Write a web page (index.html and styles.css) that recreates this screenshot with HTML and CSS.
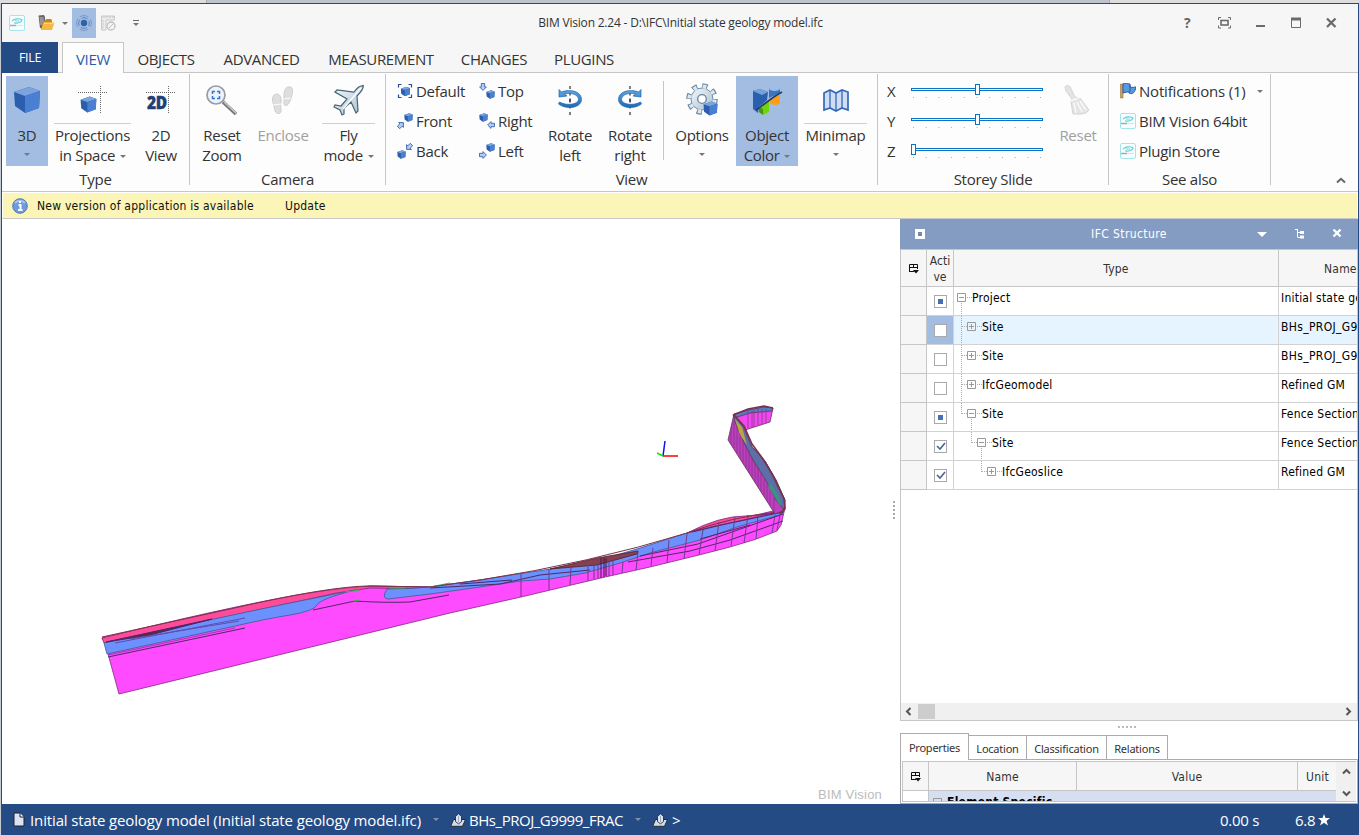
FILE: index.html
```html
<!DOCTYPE html>
<html lang="en">
<head>
<meta charset="utf-8">
<title>BIM Vision 2.24</title>
<link rel="stylesheet" href="styles.css">
</head>
<body>
<svg class="defs" width="0" height="0">
  <defs>
    <linearGradient id="metal" x1="0" y1="0" x2="1" y2="1"><stop offset="0" stop-color="#f4f8fb"/><stop offset="1" stop-color="#a9bfd0"/></linearGradient>
    <linearGradient id="spin" x1="0" y1="0" x2="0" y2="1"><stop offset="0" stop-color="#62a8e4"/><stop offset="1" stop-color="#1c69b8"/></linearGradient>
    <clipPath id="fold"><path d="M734 414 728 440 775 514 785 510 785 500 776 480 765 461 752 447 744 428V432L770 422 773 408 764 407Z"/></clipPath>
    <symbol id="cube" viewBox="0 0 28 28"><path d="M1 6 16 1 27 5 26 22 12 27 2 20Z" fill="#2b5fae"/><path d="M1 6 16 1 27 5 12 10Z" fill="#7ba3dd"/><path d="M12 10 27 5 26 22 12 27Z" fill="#4a7fd1"/></symbol>
    <symbol id="arrow" viewBox="0 0 8 8"><path d="M.6 4 4 .6 4 2.3H7.5V5.7H4V7.4Z" fill="#b5ccf0" stroke="#3966ae" stroke-width=".9"/></symbol>
    <symbol id="logo" viewBox="0 0 16 16"><rect x=".5" y=".5" width="15" height="15" rx="1.5" fill="#f8feff" stroke="#a5e5ea"/><path d="M3 6.300c1.500-2.800 7-3.300 10-1.300-1 2.600-5 4-8 2.700" fill="none" stroke="#5fd0d8" stroke-width="1.100"/><path d="M6 6c1-1.500 4-1.300 3.500.2S6.500 7 6.500 6" fill="none" stroke="#7ed8de" stroke-width=".9"/><path d="M1 10.500h6" stroke="#aaa" stroke-width="1.500"/><path d="M7 10.500h7" stroke="#c5eef0" stroke-width="1.300"/></symbol>
    <symbol id="chooser" viewBox="0 0 11 11"><path d="M1.500 9V1.500h8V6M1 8.500h5M1 4.500h9M5.500 1.500v3" fill="none" stroke="#111"/><path d="M5 7h6L8 10.500Z" fill="#111"/></symbol>
    <symbol id="site" viewBox="0 0 16 14"><path d="M3.500 6.500h12L12.500 13.300H.7Z" fill="#cfdcf0" stroke="#2b2b2b"/><path d="M5.500 8.500V3.500L8.500.8 11.500 3.500v5L8.500 10.800Z" fill="#dce6f5" stroke="#2b2b2b" stroke-width=".9"/><path d="M8.500 3v6" stroke="#8a97ab" stroke-width=".8"/></symbol>
  </defs>
</svg>
<div class="desk"><span></span></div>
<div class="window">
  <header class="titlebar">
    <div class="quick">
      <svg class="q-logo" width="16" height="16"><use href="#logo"/></svg>
      <svg class="q-open" width="17" height="16" viewBox="0 0 17 16"><path d="M.5.500 6 0 7 2v12L2 13Z" fill="#666"/><path d="M1.500 3h4M2 5h4M2 7h3M2 9h3" stroke="#ddd" stroke-width=".8"/><path d="M5 6h2l1-2h5l1 1.500V15H3Z" fill="#c98618"/><path d="M5.500 7.500H16.500L14 15H3Z" fill="#f6b83e"/><path d="M6 8.200h9.500" stroke="#fde2a0"/></svg>
      <i class="caret q-c1"></i>
      <span class="q-active"><svg width="16" height="16" viewBox="0 0 16 16" fill="none"><circle cx="8" cy="8" r="3.200" fill="#2c64a8"/><circle cx="8" cy="8" r="5.300" stroke="#4f7db8" stroke-width=".9" stroke-dasharray="6.300 2.025" stroke-dashoffset="3.150"/><circle cx="8" cy="8" r="7.400" stroke="#6b91c6" stroke-width=".8" stroke-dasharray="9 2.624" stroke-dashoffset="4.500"/></svg></span>
      <svg class="q-rule" width="15" height="16" viewBox="0 0 15 16"><path d="M.5 15V1h13v4H5v10Z" fill="#ececec" stroke="#c9c9c9"/><path d="M3 1v2M6 1v2M9 1v2M12 1v2M1 6h2M1 9h2M1 12h2" stroke="#c4c4c4"/><circle cx="10" cy="11" r="4" fill="#f3f3f3" stroke="#c0c0c0" stroke-width="1.300"/><path d="M7.500 13.500 12.500 8.500" stroke="#c0c0c0"/></svg>
      <span class="q-more"><i></i><b class="caret"></b></span>
    </div>
    <h1 class="title">BIM Vision 2.24 - D:\IFC\Initial state geology model.ifc</h1>
    <div class="controls">
      <span class="help">?</span>
      <svg width="13" height="12" viewBox="0 0 13 12" fill="none" stroke="#6b6b6b"><path d="M.5 3V.5H3M10 .5h2.500V3M12.500 8.500V11H10M3 11H.5V8.500"/><rect x="3" y="3.500" width="7" height="4.500" stroke-width="1.600"/></svg>
      <svg width="10" height="12"><path d="M0 9h9" stroke="#6b6b6b" stroke-width="2"/></svg>
      <svg width="10" height="12" viewBox="0 0 10 12"><path d="M.5 1v9.500h9V1" fill="none" stroke="#6b6b6b"/><path d="M0 2h10" stroke="#6b6b6b" stroke-width="3"/></svg>
      <svg width="11" height="12" viewBox="0 0 11 12"><path d="M1 1.500 9.500 10M9.500 1.500 1 10" stroke="#6b6b6b" stroke-width="2.300"/></svg>
    </div>
  </header>
  <nav class="tabs">
    <span class="file">FILE</span><span class="view">VIEW</span><span class="t84">OBJECTS</span><span class="t107">ADVANCED</span><span class="t132">MEASUREMENT</span><span class="t94">CHANGES</span><span class="t86">PLUGINS</span>
  </nav>
  <section class="ribbon">
    <div class="group g-type">
      <div class="tools">
        <div class="btn on b42"><div class="ico"><svg width="28" height="28"><use href="#cube"/></svg></div><span>3D</span><i class="caret"></i></div>
        <div class="btn line b77"><div class="ico"><svg width="32" height="32" viewBox="0 0 32 32"><path d="M1 8.500h30M23.500 2v27" stroke="#666" stroke-dasharray="1 1"/><svg x="3" y="12" width="17" height="17"><use href="#cube"/></svg></svg></div><span>Projections<br>in Space <i class="caret in"></i></span></div>
        <div class="btn b60"><div class="ico"><svg width="32" height="32" viewBox="0 0 32 32"><path d="M1 8.500h30M23.500 2v27" stroke="#666" stroke-dasharray="1 1"/><text x="2" y="25" class="twod" textLength="20" lengthAdjust="spacingAndGlyphs">2D</text></svg></div><span>2D<br>View</span></div>
      </div>
      <p>Type</p>
    </div>
    <div class="group g-camera">
      <div class="tools">
        <div class="btn b60"><div class="ico"><svg width="32" height="32" viewBox="0 0 32 32"><path d="M17 18 30 30" stroke="#777" stroke-width="3.600"/><path d="M18 18 30 29" stroke="#ccc" stroke-width="1.300"/><circle cx="10" cy="11" r="9" fill="#eef3fa" stroke="#969ba5" stroke-width="1.700"/><path d="M6.500 10V7.500H9M11 7.500h2.500V10M13.500 12v2.500H11M9 14.500H6.500V12" fill="none" stroke="#3278d1" stroke-width="1.500"/></svg></div><span>Reset<br>Zoom</span></div>
        <div class="btn off b60 nudge"><div class="ico"><svg width="24" height="32" viewBox="0 0 24 32"><g fill="#dedede" stroke="#c6c6c6" stroke-width=".8"><path d="M6 10C1 10 1 16 2 19c1 2 1 5 2 8 2 4 7 3 6-1 0-3-1-4 0-7 1-5-1-9-4-9Z"/><path d="M18 3c4-1 4 4 3 8-1 3-1 5-3 8-2 4-6 3-5-1 0-3 0-4 0-6 0-5 1-9 5-9Z"/></g><path d="m2 21 8-1M13 15l7-1" stroke="#fdfdfd"/></svg></div><span>Enclose</span></div>
        <div class="btn line b54"><div class="ico"><svg width="32" height="32" viewBox="0 0 32 32"><path d="M30 2c-3-1-6 2-9 6L4 6 2 8l12 7-6 7-6-1-1 2 6 3 2 5 2-1v-6l7-6 5 11 2-2-1-15c5-5 7-9 6-11Z" fill="url(#metal)" stroke="#456574" stroke-width="1.200"/><path d="M28 4 10 25" stroke="#fff" stroke-width="1.300"/></svg></div><span>Fly<br>mode <i class="caret in"></i></span></div>
      </div>
      <p>Camera</p>
    </div>
    <div class="group g-view">
      <div class="tools">
        <div class="small">
          <div><svg width="16" height="16" viewBox="0 0 16 16"><path d="M1.500 4.500v-3h3M11.500 1.500h3v3M14.500 11.500v3h-3M4.500 14.500h-3v-3" fill="none" stroke="#264f91" stroke-width="1.200"/><svg x="3.500" y="3.500" width="10" height="10"><use href="#cube"/></svg></svg>Default</div>
          <div><svg width="16" height="16" viewBox="0 0 16 16"><svg x="7" y="0" width="9" height="9"><use href="#cube"/></svg><g transform="rotate(135 4 12)"><svg x="0" y="8" width="8" height="8"><use href="#arrow"/></svg></g></svg>Front</div>
          <div><svg width="16" height="16" viewBox="0 0 16 16"><svg x="0" y="7" width="9" height="9"><use href="#cube"/></svg><g transform="rotate(-45 12 4)"><svg x="8" y="0" width="8" height="8"><use href="#arrow"/></svg></g></svg>Back</div>
        </div>
        <div class="small second">
          <div><svg width="16" height="16" viewBox="0 0 16 16"><svg x="7" y="7" width="9" height="9"><use href="#cube"/></svg><g transform="rotate(-90 4 4)"><svg x="0" y="0" width="8" height="8"><use href="#arrow"/></svg></g></svg>Top</div>
          <div><svg width="16" height="16" viewBox="0 0 16 16"><svg x="0" y="0" width="9" height="9"><use href="#cube"/></svg><svg x="8" y="8" width="8" height="8"><use href="#arrow"/></svg></svg>Right</div>
          <div><svg width="16" height="16" viewBox="0 0 16 16"><svg x="7" y="0" width="9" height="9"><use href="#cube"/></svg><g transform="rotate(180 4 12)"><svg x="0" y="8" width="8" height="8"><use href="#arrow"/></svg></g></svg>Left</div>
        </div>
        <div class="btn b60"><div class="ico low"><svg width="26" height="30" viewBox="0 0 26 30"><path d="M13 0v30" stroke="#555" stroke-width="1.500" stroke-dasharray="3 3.500"/><path id="turn" d="M2 3.500v7.500l8-1-2.500-2c7-2 14 1 14 5.500s-11 7-19 2.500l-1 2c9 6.500 23 3.500 23-4.500 0-8-11-11-20-7.500Z" fill="url(#spin)" stroke="#1c65ac" stroke-width=".7"/><path d="M13 12.500v4" stroke="#444" stroke-width="1.500"/></svg></div><span>Rotate<br>left</span></div>
        <div class="btn b60"><div class="ico low"><svg width="26" height="30" viewBox="0 0 26 30"><path d="M13 0v30" stroke="#555" stroke-width="1.500" stroke-dasharray="3 3.500"/><use href="#turn" transform="translate(26 0) scale(-1 1)"/><path d="M13 12.500v4" stroke="#444" stroke-width="1.500"/></svg></div><span>Rotate<br>right</span></div>
        <div class="divider"></div>
        <div class="btn b66"><div class="ico"><svg width="33" height="33" viewBox="0 0 33 33"><circle cx="16" cy="16" r="13.500" fill="none" stroke="#6486a3" stroke-width="4.500" stroke-dasharray="5.300 5.300"/><circle cx="16" cy="16" r="11" fill="url(#metal)" stroke="#6c8da8" stroke-width="1"/><circle cx="16" cy="16" r="12.600" fill="none" stroke="#dce7ef" stroke-width="4" stroke-dasharray="3.300 6.596" stroke-dashoffset="-.7"/><circle cx="16" cy="16" r="4.300" fill="#fff" stroke="#6486a3" stroke-width="1.300"/><svg x="17" y="18" width="15" height="15"><use href="#cube"/></svg></svg></div><span>Options</span><i class="caret"></i></div>
        <div class="btn on b62"><div class="ico low"><svg width="32" height="32" viewBox="0 0 32 32"><path d="M2 6 9 4l8 3-1 8-8 7-1 6-5-4Z" fill="#2961b0"/><path d="M2 6 9 4l8 3-6 3Z" fill="#76a2da"/><path d="m8 22 10-7v12l-6 3-4-3Z" fill="#71d40c"/><path d="m8 22 4 2v6l-4-3Z" fill="#43951b"/><path d="M18 3v10l11-5V3Z" fill="#3a74c4"/><ellipse cx="23.500" cy="3.500" rx="5.500" ry="2.500" fill="#9bbde8"/><path d="M19 14 29 9v9c-3 3-8 2-10 0Z" fill="#ff9d13"/><path d="M5 25C14 19 20 13 31 7" stroke="#263f65" stroke-width="1.700" fill="none"/></svg></div><span>Object<br>Color <i class="caret in"></i></span></div>
        <div class="btn line b63"><div class="ico low"><svg width="28" height="26" viewBox="0 0 28 26"><path d="m2 5 6-3 6 3 6-3 6 2v18l-6-2-6 3-6-3-6 2Z" fill="#cfdef5" stroke="#3467b8" stroke-width="1.700"/><path d="M8 2v18M14 5v18M20 2v18" stroke="#3467b8" stroke-width="1.300"/></svg></div><span>Minimap</span><i class="caret"></i></div>
      </div>
      <p>View</p>
    </div>
    <div class="group g-storey">
      <div class="tools">
        <div class="sliders">
          <div><b>X</b><svg width="134" height="20"><rect x="1.500" y="5.500" width="131" height="2" fill="#fff" stroke="#0b72c4"/><path d="M3 14.500h130" stroke="#aaa" stroke-dasharray="1 11.700"/><rect x="65.500" y="1.500" width="4" height="10" fill="#fff" stroke="#0b72c4"/></svg></div>
          <div><b>Y</b><svg width="134" height="20"><rect x="1.500" y="5.500" width="131" height="2" fill="#fff" stroke="#0b72c4"/><path d="M3 14.500h130" stroke="#aaa" stroke-dasharray="1 11.700"/><rect x="65.500" y="1.500" width="4" height="10" fill="#fff" stroke="#0b72c4"/></svg></div>
          <div><b>Z</b><svg width="134" height="20"><rect x="1.500" y="5.500" width="131" height="2" fill="#fff" stroke="#0b72c4"/><path d="M3 14.500h130" stroke="#aaa" stroke-dasharray="1 11.700"/><rect x="1.500" y="1.500" width="4" height="10" fill="#fff" stroke="#0b72c4"/></svg></div>
        </div>
        <div class="btn off b60"><div class="ico"><svg width="30" height="32" viewBox="0 0 30 32"><path d="M2 3c2-3 6-1 6 2l4 8 5 1 9 12-3 3-5 1-8 0-2-12 1-3-6-8Z" fill="#e4e4e4" stroke="#d4d4d4"/><path d="m8 17 9-4M11 19l2 10M14 18l5 10M17 17l6 9" stroke="#f8f8f8" stroke-width="1.500"/></svg></div><span>Reset</span></div>
      </div>
      <p>Storey Slide</p>
    </div>
    <div class="group g-also">
      <div class="tools"><div class="small links">
        <div><svg width="16" height="16" viewBox="0 0 16 16"><path d="M.5 1h2.500v14H.5Z" fill="#d5a052" stroke="#98743a" stroke-width=".6"/><path d="M3 1c3-2 5 0 7 0v3c2.500 1 4 0 6 0-1 5-3 8-7 6V9c-2 0-3 0-6 1Z" fill="#5a98e2" stroke="#225ca4"/><path d="M10 2v7" stroke="#225ca4"/></svg><span class="notif">Notifications (1)</span><i class="caret"></i></div>
        <div><svg width="16" height="16"><use href="#logo"/></svg>BIM Vision 64bit</div>
        <div><svg width="16" height="16"><use href="#logo"/></svg>Plugin Store</div>
      </div></div>
      <p>See also</p>
    </div>
    <svg class="collapse" width="10" height="7" viewBox="0 0 10 7"><path d="M1 5.500 5 1.800 9 5.500" fill="none" stroke="#666" stroke-width="2"/></svg>
  </section>
  <div class="notice">
    <svg width="16" height="16" viewBox="0 0 16 16"><circle cx="8" cy="8" r="7.300" fill="#6d9bdd" stroke="#507bb9"/><path d="M3 5a6 5 0 0 1 10 0" fill="none" stroke="#a9c7ef" stroke-width="2"/><path d="M8 3v2M6.500 7h2v5M6 12h4.500" fill="none" stroke="#fff" stroke-width="2"/></svg>
    <span class="msg">New version of application is available</span><span>Update</span>
  </div>
  <main>
    <div class="viewport">
      <svg class="model" width="891" height="585" viewBox="2 219 891 585">
        <g stroke="#7d2b7e" stroke-width=".8" stroke-linejoin="round">
          <path d="M102 638 105 643 119 694 450 613 521 597 603 577.500 650 567 699 555 730 547 755 539.500 777 531 781 525 785 508 740 519 687 534 620 555 550 570 480 580 430 587 370 586 230 609Z" fill="#ff4bff"/>
          <path d="M102 638 Q200 614 265 601 T370 586 L430 587 460 584 430 589 370 588 Q335 592 300 601 L104 643Z" fill="#ff4b9c"/>
          <path d="M104 643 Q245 612 300 601 T355 590 Q320 599 317 605 T290 615 Q265 619 235 626 L107 654Z" fill="#6c91ff" stroke="#3c5c8d"/>
          <path d="M387 589Q410 589 430 587 L480 580 550 569 600 560 640 548 687 533 710 525 740 518 784 512 780 515 740 526 700 540 650 553 620 563 585 573 550 579 521 581 480 587 430 594 388 599Q381 598 387 589Z" fill="#6c91ff" stroke="#3c5c8d"/>
          <path d="M687 533Q720 516 745 516L770 514 784 510 740 521 710 527Z" fill="#ff4b9c"/>
          <path d="M550 569 597 558 638 551 637 554 597 565Z" fill="#88404f" stroke="#4b2230"/>
        </g>
        <g fill="none" stroke="#4f2768" stroke-width="1">
          <path d="M106 642 212 619 150 635Z" fill="#5c2b3b"/>
          <path d="M115 643 245 618M130 639 239 621" stroke="#624bb0"/>
          <path d="M108 657 245 628M313 610 355 601Q385 603 410 602L449 595M430 588 500 584 540 575 590 570M460 584 512 580M628 562 690 551 730 540 783 521M640 556 698 544 783 514M692 532 730 523 783 512M700 539 750 525"/>
          <path d="M108 655 235 628" stroke="#a734bd"/>
          <path d="M345 592 360 590M353 601 360 600M390 588 405 588M430 587 450 583" stroke="#3bb64c"/>
          <path d="M521 573v24M549 569v21M571 567l-1 18M588 564v17M594 563v16M598 560v18M609 560v16M613 559v16M623 562l-1 11M638 552l-2 18M653 548l-2 18M669 540l-2 23M687 534l-3 25M703 530l-4 25M719 522l-4 29M735 517l-4 29M748 515l-4 28M758 515l-2 24M775 515l-3 18M780 515l-3 15" stroke="#733b89"/>
          <path d="M601 558v20M604 558v19M606 558v18" stroke="#4b1a48" stroke-width="1.300" stroke-opacity=".8"/>
          <path d="M480 580Q590 563 687 533 730 517 784 511" stroke="#80304c"/>
          <path d="M102 637 230 609Q330 586 370 586L430 587 480 580" stroke="#80304c"/>
        </g>
        <g stroke="#64335f" stroke-width=".8">
          <path d="M734 414 748 410 764 407 773 408 770 422 745 430 733 438Z" fill="#f047ef"/>
          <path d="m733 415 15-5 16-3 9 1-1 3-22 2-16 5Z" fill="#5a7bc2"/>
          <path d="M734 414 728 440 775 514 785 510 785 500 776 480 765 461 752 447 744 428Z" fill="#bf3dc0"/>
          <path d="M734 415 744 428 752 447 765 461 776 480 785 500 784 510 776 500 765 479 753 460 744 443 735 422Z" fill="#5c6fa7"/>
          <path d="m735 419 7 8 5 18-7-10Z" fill="#bba540" stroke="none"/>
          <path d="m771 483 10 19-1 4-12-20Z" fill="#3a9580" stroke="none"/>
        </g>
        <path clip-path="url(#fold)" d="M731 421v24M734 421v27M737 427v27M740 434v27M743 440v25M746 445v25M749 450v25M752 457v25M755 463v23M758 467v25M761 473v24M764 479v23M767 485v21M770 491v20M774 497v15M748 411v17M752 411v16M754 410v17M758 409v16M762 409v15M766 409v14" stroke="#793679" stroke-width=".7"/>
        <path d="M733 415 748 409 764 406 773 408M734 415 744 426 752 444 763 459 772 474 784 499 785 508 780 514" fill="none" stroke="#76334e" stroke-width="1.600"/>
        <path d="M663 456 665 441" stroke="#0018e8" stroke-width="1.500"/><path d="M663 456h15" stroke="#f00" stroke-width="1.500"/><path d="m657 453 6 3" stroke="#0e0" stroke-width="1.500"/>
      </svg>
      <span class="watermark">BIM Vision</span>
      <div class="grip"><svg width="3" height="20"><path d="M1 0v20" stroke="#aaa" stroke-width="2" stroke-dasharray="2 2"/></svg></div>
    </div>
    <aside>
      <div class="panelhead"><svg width="10" height="10"><path d="M0 0h10v10H0Z" fill="#fff"/><path d="M3 3h4v4H3Z" fill="#7188b2"/></svg><b>IFC Structure</b>
        <svg class="acts" width="83" height="12" viewBox="0 0 83 12" fill="none" stroke="#fff"><path d="M0 4h10L5 9Z" fill="#fff" stroke="none"/><path d="M38 1.500h3M40.500 1.500v8M41 4.500h6M41 9.500h6"/><path d="M43 4.500h4M43 9h4" stroke-width="3"/><path d="M76.500 1.500 83.500 8.500M83.500 1.500 76.500 8.500" stroke-width="2.300"/></svg></div>
      <div class="tree">
        <div class="row head"><span class="ind"><svg width="11" height="11"><use href="#chooser"/></svg></span><span class="act">Acti<br>ve</span><span class="type">Type</span><span class="name">Name</span></div>
        <div class="row"><span class="ind"></span><span class="act"><i class="box part"></i></span><span class="type"><svg width="18" height="29"><path class="dot" d="M7.500 16v13M13 10.500h5"/><path class="ex" d="M3.500 6.500h8v8h-8ZM5 10.500h5"/></svg>Project</span><span class="name">Initial state geology</span></div>
        <div class="row sel"><span class="ind"></span><span class="act"><i class="box"></i></span><span class="type"><svg width="28" height="29"><path class="dot" d="M7.500 0v29M8 10.500h5M23 10.500h5"/><path class="ex" d="M13.500 6.500h8v8h-8ZM15 10.500h5M17.500 8v5"/></svg>Site</span><span class="name wide">BHs_PROJ_G9999</span></div>
        <div class="row"><span class="ind"></span><span class="act"><i class="box"></i></span><span class="type"><svg width="28" height="29"><path class="dot" d="M7.500 0v29M8 10.500h5M23 10.500h5"/><path class="ex" d="M13.500 6.500h8v8h-8ZM15 10.500h5M17.500 8v5"/></svg>Site</span><span class="name wide">BHs_PROJ_G9999</span></div>
        <div class="row"><span class="ind"></span><span class="act"><i class="box"></i></span><span class="type"><svg width="28" height="29"><path class="dot" d="M7.500 0v29M8 10.500h5M23 10.500h5"/><path class="ex" d="M13.500 6.500h8v8h-8ZM15 10.500h5M17.500 8v5"/></svg>IfcGeomodel</span><span class="name">Refined GM</span></div>
        <div class="row"><span class="ind"></span><span class="act"><i class="box part"></i></span><span class="type"><svg width="28" height="29"><path class="dot" d="M7.500 0v11M8 10.500h5M23 10.500h5M17.500 16v13"/><path class="ex" d="M13.500 6.500h8v8h-8ZM15 10.500h5"/></svg>Site</span><span class="name">Fence Section</span></div>
        <div class="row"><span class="ind"></span><span class="act"><i class="box"><svg width="11" height="11"><path d="m2 5 3 3 5-6" class="tick"/></svg></i></span><span class="type"><svg width="38" height="29"><path class="dot" d="M17.500 0v11M18 10.500h5M33 10.500h5M27.500 16v13"/><path class="ex" d="M23.500 6.500h8v8h-8ZM25 10.500h5"/></svg>Site</span><span class="name">Fence Section</span></div>
        <div class="row"><span class="ind"></span><span class="act"><i class="box"><svg width="11" height="11"><path d="m2 5 3 3 5-6" class="tick"/></svg></i></span><span class="type"><svg width="48" height="29"><path class="dot" d="M27.500 0v11M28 10.500h5M43 10.500h5"/><path class="ex" d="M33.500 6.500h8v8h-8ZM35 10.500h5M37.500 8v5"/></svg>IfcGeoslice</span><span class="name">Refined GM</span></div>
        <div class="hscroll"><svg width="7" height="9"><path d="M5.500 1 2 4.500 5.500 8" class="chev"/></svg><i></i><svg width="7" height="9"><path d="M1.500 1 5 4.500 1.500 8" class="chev"/></svg></div>
      </div>
      <div class="hgrip"><svg width="20" height="3"><path d="M0 1h20" stroke="#bbb" stroke-width="2" stroke-dasharray="2 2"/></svg></div>
      <div class="ptabs"><span class="cur">Properties</span><span class="p59">Location</span><span class="p80">Classification</span><span class="p62">Relations</span></div>
      <div class="props">
        <div class="ptable">
          <div class="prow phead"><span class="c27"><svg width="11" height="11"><use href="#chooser"/></svg></span><span class="c148">Name</span><span class="c221">Value</span><span class="c40">Unit</span></div>
          <div class="prow pdata"><span class="c27"></span><span class="cat"><svg width="18" height="16"><path class="ex" d="M4.500 7.500h8v8h-8ZM6 11.500h5"/><path class="dot" d="M14 11.500h4"/></svg>Element Specific</span></div>
        </div>
        <div class="vscroll"><svg width="9" height="7"><path d="M1 5.500 4.500 2 8 5.500" class="chev"/></svg><svg width="9" height="7"><path d="M1 1.500 4.500 5 8 1.500" class="chev"/></svg></div>
      </div>
    </aside>
  </main>
  <footer>
    <svg width="12" height="15" viewBox="0 0 12 15"><path d="M1 1h6l4 4v9H1Z" fill="#d8e3f4" stroke="#222"/><path d="M7 1v4h4" fill="#fff" stroke="#222"/></svg>
    <span class="s1">Initial state geology model (Initial state geology model.ifc)</span><i class="caret"></i>
    <svg class="site" width="16" height="14"><use href="#site"/></svg><span class="s2">BHs_PROJ_G9999_FRAC</span><i class="caret"></i>
    <svg class="site" width="16" height="14"><use href="#site"/></svg><span class="s3">&gt;</span>
    <span class="time">0.00 s</span><span class="score">6.8</span><svg class="star" width="12" height="12" viewBox="0 0 12 12"><path d="m6 0 1.500 4H12L8.500 7 10 11.500 6 8.700 2 11.500 3.500 7 0 4h4.500Z" fill="#fff"/></svg>
  </footer>
</div>
</body>
</html>
```
FILE: styles.css
```css
* { box-sizing: border-box; }
body { margin: 0; width: 1359px; height: 835px; overflow: hidden; background: #c5cbd3; font-family: "Open Sans", "Noto Sans", sans-serif; font-size: 15px; letter-spacing: -.27px; color: #333; display: flex; flex-direction: column; }
svg { display: block; flex: none; }
i, b { font-style: normal; font-weight: 400; }
h1, p { margin: 0; font-weight: 400; }
.defs { position: absolute; }
.desk { height: 3px; flex: none; background: #ddd; }
.desk span { display: block; margin-left: 206px; width: 904px; height: 3px; background: #bfc3cb; border: solid #a6aab3; border-width: 0 1px; }
.window { width: 1358px; height: 832px; margin-left: 1px; border: 1px solid #254b85; border-bottom: 0; background: #fff; display: flex; flex-direction: column; }
.caret { display: block; flex: none; width: 0; height: 0; border: 3px solid transparent; border-top-color: #777; border-bottom: 0; }
.titlebar { height: 38px; background: #f6f6f6; display: grid; grid-template-columns: 400px 557px 1fr; align-items: center; flex: none; }
.quick { display: flex; align-items: center; height: 38px; padding-left: 7px; }
.q-open { margin-left: 13px; }
.q-c1 { margin-left: 7px; }
.q-active { width: 24px; height: 30px; margin-left: 4px; background: #a3bce2; display: grid; place-items: center; }
.q-rule { margin-left: 5px; }
.q-more { margin-left: 17px; display: grid; gap: 2px; justify-items: center; }
.q-more i { width: 6px; height: 1px; background: #666; }
.title { font-size: 12px; text-align: center; letter-spacing: -.2px; white-space: nowrap; padding-bottom: 1px; }
.controls { display: flex; align-items: center; padding-left: 225px; padding-bottom: 1px; }
.controls svg { margin-left: 25px; }
.help { font-size: 14px; font-weight: 700; width: 9px; color: #666; }
.tabs { height: 31px; flex: none; background: linear-gradient(#c6c6c6,#c6c6c6) bottom/100% 1px no-repeat #f6f6f6; display: flex; font-size: 15px; text-align: center; letter-spacing: -.35px; }
.tabs span { line-height: 35px; }
.tabs .file { width: 56px; height: 31px; line-height: 32px; background: #254b85; color: #fff; font-size: 12.5px; }
.tabs .view { width: 62px; margin-left: 4px; background: #fdfdfd; border: 1px solid #c6c6c6; border-bottom: 0; color: #2a5ea9; line-height: 33px; }
.t84 { width: 84px; } .t107 { width: 107px; } .t132 { width: 132px; } .t94 { width: 94px; } .t86 { width: 86px; }
.ribbon { height: 119px; flex: none; background: #fdfdfd; border-bottom: 1px solid #c6c6c6; display: flex; position: relative; }
.group { height: 111px; margin-top: 1px; border-right: 1px solid #c6c6c6; display: flex; flex-direction: column; }
.group p { text-align: center; line-height: 20px; margin-top: 3px; }
.tools { display: flex; height: 92px; padding-top: 2px; }
.g-type { width: 188px; } .g-camera { width: 196px; } .g-view { width: 492px; } .g-storey { width: 231px; } .g-also { width: 162px; }
.g-type .tools { padding-left: 4px; } .g-camera .tools { padding-left: 2px; } .g-view .tools { padding-left: 11px; } .g-storey .tools { padding-left: 9px; } .g-also .tools { padding-left: 11px; }
.btn { height: 90px; flex: none; display: flex; flex-direction: column; align-items: center; text-align: center; line-height: 20px; white-space: nowrap; }
.btn .ico { height: 47px; width: 100%; margin-bottom: 2px; display: grid; place-items: center; flex: none; }
.btn.line .ico { border-bottom: 1px solid #d0d0d0; height: 48px; margin-bottom: 1px; }
.btn .ico.low { padding-top: 2px; }
.btn.on { background: #a3bce2; }
.btn.off { color: #a0a0a0; }
.btn > .caret { margin-top: 8px; }
.caret.in { display: inline-block; vertical-align: middle; margin-left: 1px; }
.b42 { width: 42px; } .b54 { width: 53px; margin-left: 9px; } .b60 { width: 60px; } .b62 { width: 62px; } .b63 { width: 63px; margin-left: 6px; } .b66 { width: 66px; margin-left: 5px; margin-right: 1px; }
.b77 { width: 77px; margin-left: 6px; }
.nudge { margin-left: 1px; }
.twod { font: 900 17px "Open Sans", sans-serif; fill: #1f3e77; stroke: #1f3e77; stroke-width: .4; }
.small { width: 82px; flex: none; }
.small.second { width: 61px; }
.small > div { height: 30px; display: flex; align-items: center; gap: 3px; white-space: nowrap; }
.small.links { width: 150px; }
.small.links .caret { margin-left: 8px; }
.notif { letter-spacing: -.18px; }
.divider { width: 1px; height: 79px; margin: 5px 0 0 3px; background: #c6c6c6; }
.sliders { width: 161px; }
.sliders > div { height: 30px; display: flex; align-items: flex-start; line-height: 30px; }
.sliders b { width: 23px; }
.sliders svg { margin-top: 7px; }
.collapse { position: absolute; right: 12px; bottom: 7px; }
.notice { height: 27px; flex: none; background: #fbf5b7; border: 1px solid #fff; border-bottom-color: #c8c8c8; display: flex; align-items: center; font-family: "DejaVu Sans Condensed", "DejaVu Sans", sans-serif; font-size: 12px; font-stretch: condensed; letter-spacing: .24px; color: #111; padding-left: 9px; }
.msg { margin: 0 31px 0 9px; width: 217px; white-space: nowrap; }
main { height: 585px; flex: none; display: flex; }
.viewport { width: 898px; height: 585px; position: relative; display: flex; }
.watermark { position: absolute; right: 18px; bottom: 2px; font: 13px "Liberation Sans", sans-serif; letter-spacing: .2px; color: #bbb; }
.grip { display: grid; place-items: center; width: 3px; padding-bottom: 2px; }
aside { width: 458px; font-family: "DejaVu Sans Condensed", "DejaVu Sans", sans-serif; font-stretch: condensed; font-size: 12px; letter-spacing: .22px; overflow: hidden; }
.panelhead { height: 30px; background: #849cc2; color: #fff; display: flex; align-items: center; padding-left: 15px; }
.panelhead b { width: 408px; text-align: center; margin-right: -76px; letter-spacing: .4px; }
.panelhead .acts { overflow: visible; }
.tree { height: 472px; border: 1px solid #c6c6c6; display: flex; flex-direction: column; }
.row { display: grid; grid-template-columns: 26px 27px 325px 78px; height: 29px; color: #000; flex: none; }
.row > span { border-right: 1px solid #d2d2d2; border-bottom: 1px solid #d2d2d2; overflow: hidden; white-space: nowrap; }
.row .ind { background: #f6f6f6; border-color: #c6c6c6; }
.row .act { display: grid; place-items: start center; padding-top: 8px; }
.row .type { display: flex; line-height: 22px; }
.row .name { line-height: 22px; padding-left: 2px; border-right: 0; }
.row .name.wide { letter-spacing: .35px; }
.row.head { height: 37px; color: #333; background: #f6f6f6; }
.row.head > span { border-color: #c6c6c6; }
.row.head .ind { display: grid; place-items: center; }
.row.head .act { padding: 3px 0 0; line-height: 16px; text-align: center; letter-spacing: 0; }
.row.head .type, .row.head .name { display: block; text-align: center; line-height: 38px; }
.row.head .name { padding-left: 45px; text-align: left; }
.row.sel .type, .row.sel .name { background: #e6f4ff; }
.row.sel .act { background: #a3bce2; }
.box { width: 13px; height: 13px; border: 1px solid #aaa; background: #fff; display: grid; place-items: center; }
.part::after { content: ""; width: 5px; height: 5px; background: #4471b3; }
.tick { fill: none; stroke: #48649a; stroke-width: 1.6; }
.dot { fill: none; stroke: #aaa; stroke-dasharray: 1 1; }
.ex { fill: none; stroke: #999; }
.chev { fill: none; stroke: #555; stroke-width: 2; }
.hscroll { height: 17px; margin-top: auto; background: #f0f0f0; display: flex; align-items: center; padding: 0 5px 0 4px; }
.hscroll i { width: 17px; height: 15px; margin-left: 6px; margin-right: auto; background: #cdcdcd; }
.hgrip { height: 12px; display: grid; place-items: center; padding-right: 2px; }
.ptabs { height: 27px; display: flex; align-items: flex-end; color: #333; font: 11px "Noto Sans", sans-serif; letter-spacing: -.23px; text-align: center; background: linear-gradient(#ababab,#ababab) bottom/100% 1px no-repeat; }
.ptabs span { height: 25px; line-height: 25px; border: 1px solid #ababab; border-left: 0; white-space: nowrap; }
.ptabs .cur { width: 69px; height: 27px; line-height: 28px; border-left: 1px solid #ababab; border-bottom: 0; background: #fff; }
.p59 { width: 58px; } .p80 { width: 80px; } .p62 { width: 61px; }
.props { height: 44px; border: 1px solid #ababab; border-top: 0; padding: 1px; display: flex; }
.ptable { width: 436px; border: 1px solid #c6c6c6; border-right: 0; overflow: hidden; }
.prow { display: flex; }
.prow span { border-right: 1px solid #c6c6c6; flex: none; }
.phead { height: 29px; background: #f6f6f6; border-bottom: 1px solid #c6c6c6; line-height: 30px; text-align: center; }
.prow .c27 { width: 26px; display: grid; place-items: center; } .c148 { width: 148px; } .c221 { width: 221px; } .c40 { width: 40px; }
.pdata { height: 16px; font-weight: 700; color: #000; letter-spacing: .25px; }
.prow .cat { width: 409px; background: #d5dff1; display: flex; line-height: 23px; }
.vscroll { width: 20px; background: #f0f0f0; border: solid #c6c6c6; border-width: 1px 0; display: flex; flex-direction: column; justify-content: space-between; align-items: center; padding: 6px 0 4px; }
footer { height: 31px; background: #254b85; color: #fff; display: flex; align-items: center; padding-left: 11px; flex: none; white-space: nowrap; }
footer .caret { border-top-color: #8190ab; margin-left: 12px; }
.s1 { width: 391px; margin-left: 5px; letter-spacing: -.13px; }
.site { margin-left: 11px; }
.s2 { width: 154px; margin-left: 3px; letter-spacing: -.46px; }
.s3 { margin-left: 4px; }
.time { margin-left: auto; width: 75px; }
.score { width: 23px; }
.star { margin: 0 28px 0 0; }
```
